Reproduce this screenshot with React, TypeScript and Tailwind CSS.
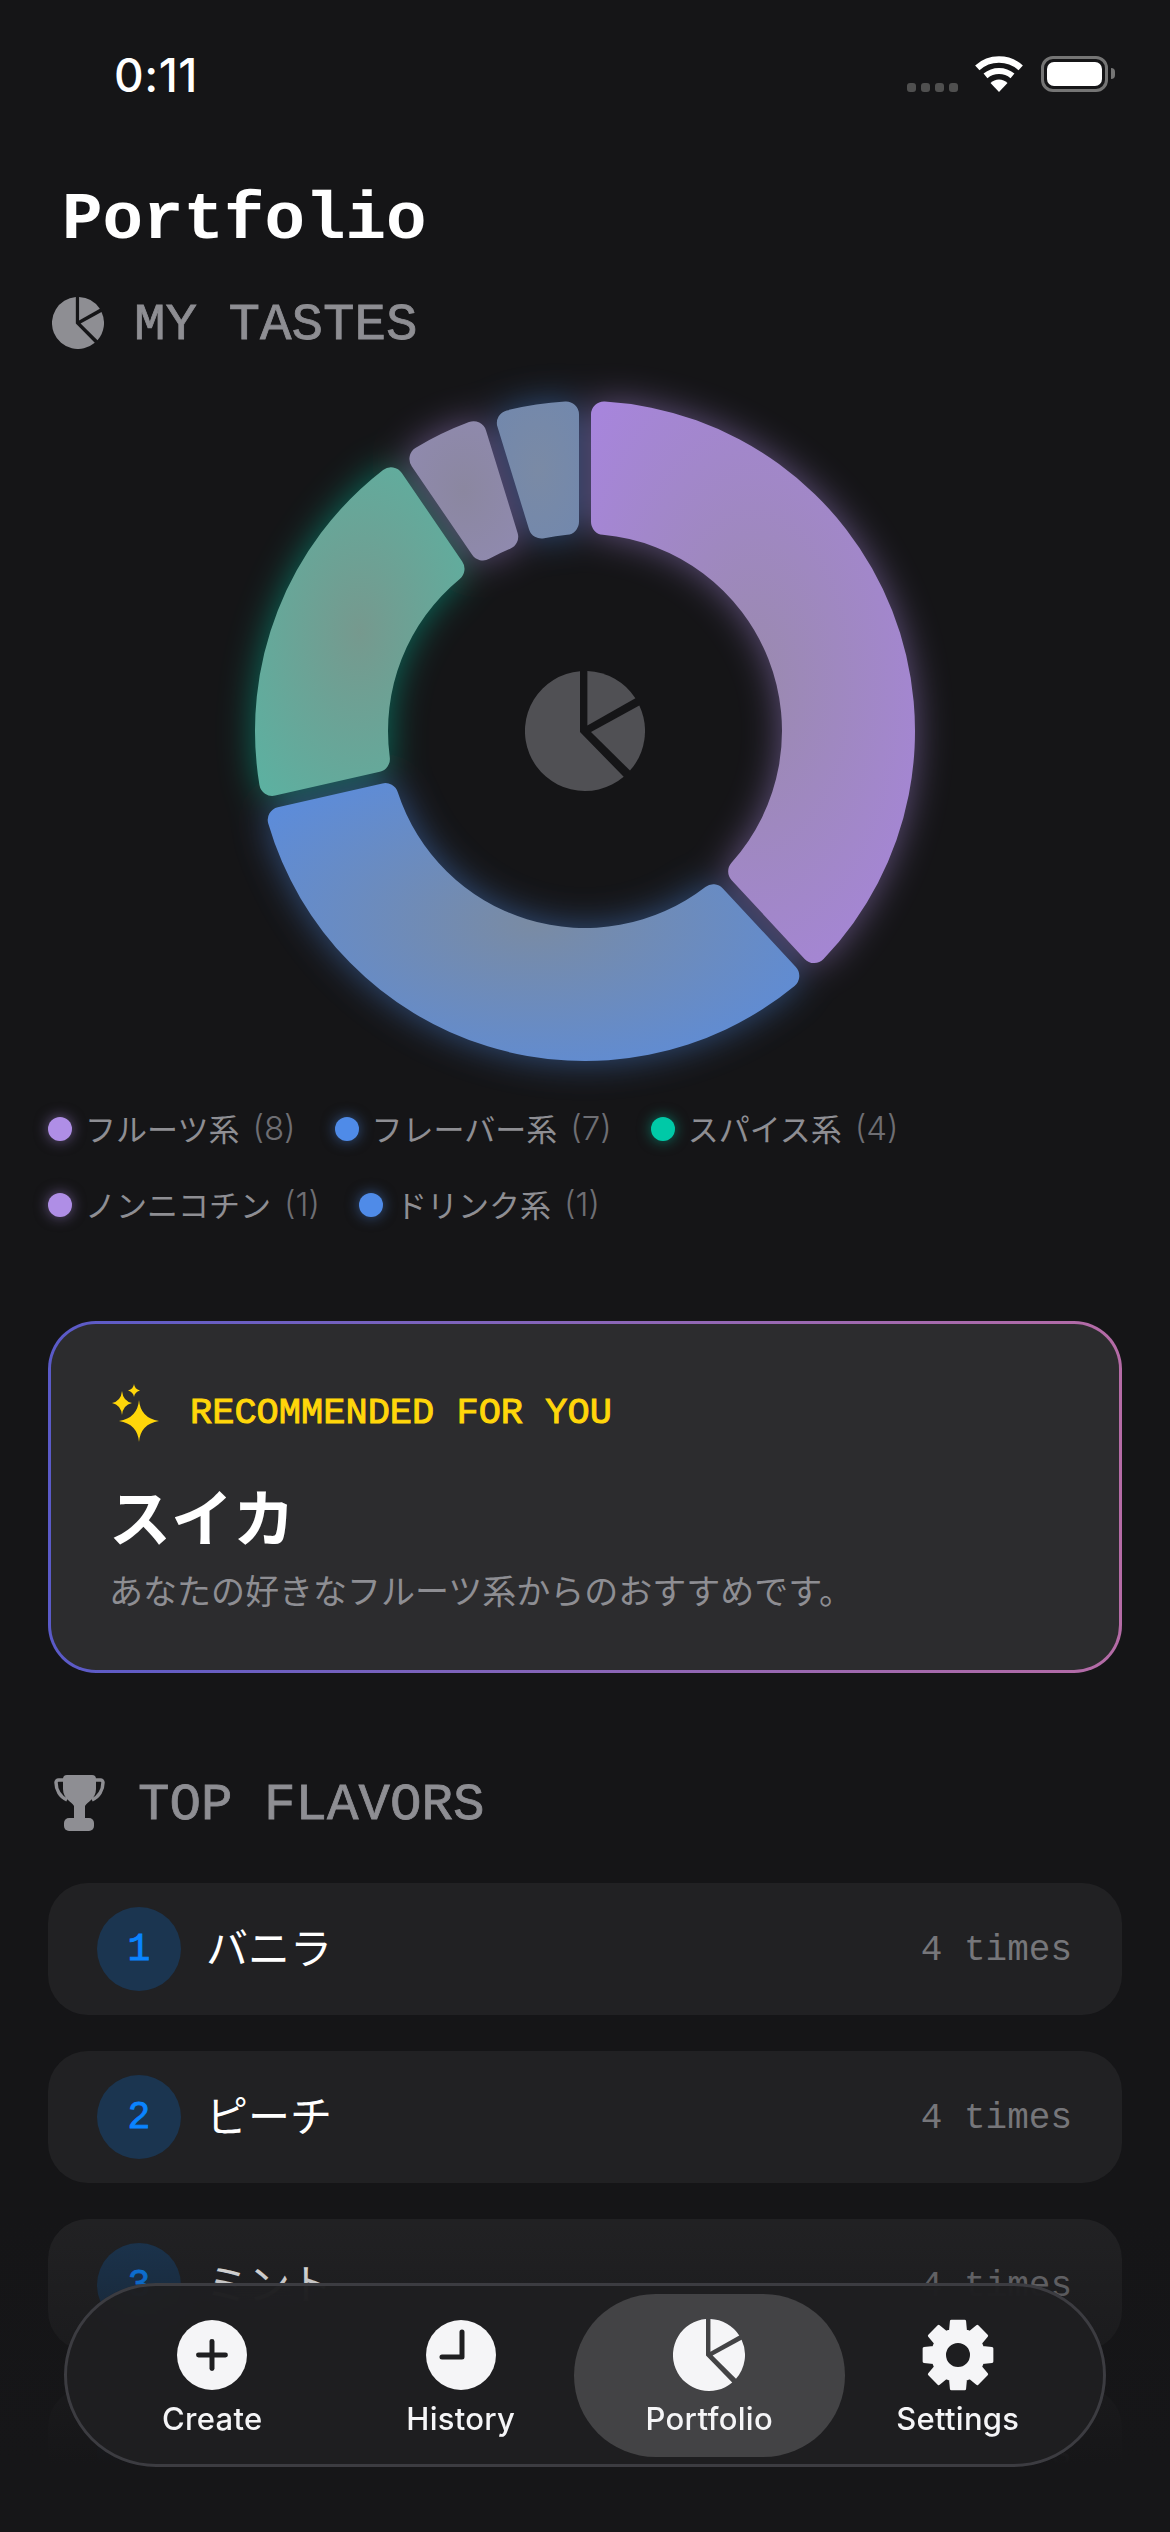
import { LuPlus } from "react-icons/lu";

const segments = [
  { value: 8, glow: "#af8ee6", center: "#9a8aae", edge: "#a785dc" },
  { value: 7, glow: "#4f8be8", center: "#7a8ba3", edge: "#5a8cde" },
  { value: 4, glow: "#00c9a7", center: "#76998e", edge: "#5cb1a1" },
  { value: 1, glow: "#af8ee6", center: "#8b87a0", edge: "#908ab0" },
  { value: 1, glow: "#4f8be8", center: "#7a8aa5", edge: "#7288ad" },
];

const legend = [
  { name: "フルーツ系", count: 8, dot: "bg-[#af8ee6] shadow-[0_0_14px_#af8ee688]" },
  { name: "フレーバー系", count: 7, dot: "bg-[#4f8be8] shadow-[0_0_14px_#4f8be888]" },
  { name: "スパイス系", count: 4, dot: "bg-[#00c9a7] shadow-[0_0_14px_#00c9a788]" },
  { name: "ノンニコチン", count: 1, dot: "bg-[#af8ee6] shadow-[0_0_14px_#af8ee688]" },
  { name: "ドリンク系", count: 1, dot: "bg-[#4f8be8] shadow-[0_0_14px_#4f8be888]" },
];

const flavors = [
  { rank: 1, name: "バニラ", times: 4 },
  { rank: 2, name: "ピーチ", times: 4 },
  { rank: 3, name: "ミント", times: 4 },
  { rank: 4, name: "コーヒー", times: 3 },
];

const CX = 380;
const CY = 370;
const OUTER = 330;
const INNER = 197;
const GAP = 6;
const CORNER = 13;

// point at distance `along` on the radial line of `angle`, shifted sideways by `side`
function pt(angle: number, along: number, side: number) {
  const ux = Math.sin(angle);
  const uy = -Math.cos(angle);
  const x = CX + ux * along - uy * side;
  const y = CY + uy * along + ux * side;
  return `${x.toFixed(2)} ${y.toFixed(2)}`;
}

function sectorPath(a0: number, a1: number) {
  const c = CORNER;
  const off = c + GAP;
  const dOut = Math.asin(off / (OUTER - c));
  const dIn = Math.asin(off / (INNER + c));
  const lenOut = Math.sqrt((OUTER - c) ** 2 - off ** 2);
  const lenIn = Math.sqrt((INNER + c) ** 2 - off ** 2);
  const large = a1 - a0 - 2 * dOut > Math.PI ? 1 : 0;
  return [
    `M${pt(a0, lenIn, GAP)}`,
    `L${pt(a0, lenOut, GAP)}`,
    `A${c} ${c} 0 0 1 ${pt(a0 + dOut, OUTER, 0)}`,
    `A${OUTER} ${OUTER} 0 ${large} 1 ${pt(a1 - dOut, OUTER, 0)}`,
    `A${c} ${c} 0 0 1 ${pt(a1, lenOut, -GAP)}`,
    `L${pt(a1, lenIn, -GAP)}`,
    `A${c} ${c} 0 0 1 ${pt(a1 - dIn, INNER, 0)}`,
    `A${INNER} ${INNER} 0 ${large} 0 ${pt(a0 + dIn, INNER, 0)}`,
    `A${c} ${c} 0 0 1 ${pt(a0, lenIn, GAP)}`,
    "Z",
  ].join(" ");
}

function gearPath() {
  const parts: string[] = [];
  for (let k = 0; k < 8; k++) {
    const a = (k * Math.PI) / 4;
    const p = (deg: number, r: number) => {
      const t = a + (deg * Math.PI) / 180;
      return `${(36 + Math.sin(t) * r).toFixed(2)} ${(36 - Math.cos(t) * r).toFixed(2)}`;
    };
    parts.push(`${k === 0 ? "M" : "L"}${p(-17, 25.5)}`, `L${p(-11, 34.5)}`, `L${p(11, 34.5)}`, `L${p(17, 25.5)}`);
  }
  return parts.join(" ") + " Z M36 22.5 A13.5 13.5 0 1 0 36 49.5 A13.5 13.5 0 1 0 36 22.5 Z";
}

function PieIcon({ className }: { className: string }) {
  return (
    <svg viewBox="0 0 120 120" className={className} fill="currentColor">
      <path d="M55 .2V61L98.7 105.8A60 60 0 1 1 55 .2Z" />
      <path d="M62.4 0V54.5L110.4 27.3A60 60 0 0 0 62.4 0Z" />
      <path d="M66 61L114.3 34.4A60 60 0 0 1 105 99.6Z" />
    </svg>
  );
}

function Donut() {
  const total = segments.reduce((s, x) => s + x.value, 0);
  let acc = 0;
  const arcs = segments.map((s, i) => {
    const a0 = (acc / total) * Math.PI * 2;
    acc += s.value;
    const a1 = (acc / total) * Math.PI * 2;
    return { ...s, i, d: sectorPath(a0, a1) };
  });
  return (
    <div className="relative mx-auto mt-[8px] h-[740px] w-[760px]">
      <svg viewBox="0 0 760 740" className="h-[740px] w-[760px] overflow-visible">
        <defs>
          <filter id="glow" filterUnits="userSpaceOnUse" x="-60" y="-80" width="880" height="900">
            <feGaussianBlur stdDeviation="18" />
          </filter>
          {arcs.map((a) => (
            <radialGradient key={a.i} id={`seg${a.i}`} cx="0.5" cy="0.5" r="0.68">
              <stop offset="0" stopColor={a.center} />
              <stop offset="1" stopColor={a.edge} />
            </radialGradient>
          ))}
        </defs>
        <g filter="url(#glow)" opacity="0.5">
          {arcs.map((a) => (
            <path key={a.i} d={a.d} fill={a.glow} />
          ))}
        </g>
        {arcs.map((a) => (
          <path key={a.i} d={a.d} fill={`url(#seg${a.i})`} />
        ))}
      </svg>
      <div className="absolute inset-0 flex items-center justify-center">
        <PieIcon className="h-[120px] w-[120px] text-[#505054]" />
      </div>
    </div>
  );
}

function StatusBar() {
  return (
    <div className="flex h-[110px] items-start justify-between pl-[114px] pr-[55px] pt-[47px]">
      <span className="font-['Inter',sans-serif] text-[46px] font-medium leading-[56px] tracking-[0.5px] text-white">0:11</span>
      <div className="mt-[8px] flex h-[37px] items-center">
        <div className="flex gap-[5px] self-end">
          <div className="h-[9px] w-[9px] rounded-[3px] bg-[#4f4f4f]" />
          <div className="h-[9px] w-[9px] rounded-[3px] bg-[#4f4f4f]" />
          <div className="h-[9px] w-[9px] rounded-[3px] bg-[#4f4f4f]" />
          <div className="h-[9px] w-[9px] rounded-[3px] bg-[#4f4f4f]" />
        </div>
        <svg viewBox="0 0 48 36" className="ml-[17px] h-[36px] w-[48px]" fill="none" stroke="#fff">
          <path d="M24 36L15.5 27A12 12 0 0 1 32.5 27Z" fill="#fff" stroke="none" />
          <path d="M10.5 19.9A21 21 0 0 1 37.5 19.9" strokeWidth="6" />
          <path d="M2.3 11.85A32.5 32.5 0 0 1 45.7 11.85" strokeWidth="6.5" />
        </svg>
        <div className="ml-[18px] flex items-center">
          <div className="h-[36px] w-[67px] rounded-[12px] border-[3px] border-[#757575] p-[3px]">
            <div className="h-full w-full rounded-[7px] bg-white" />
          </div>
          <div className="ml-[3px] h-[11px] w-[4px] rounded-r-full bg-[#757575]" />
        </div>
      </div>
    </div>
  );
}

function Sparkles() {
  return (
    <svg viewBox="0 0 48 58" className="h-[58px] w-[48px] shrink-0" fill="#ffd60a">
      <path d="M27 16Q28.5 34 47 37Q28.5 40 27 58Q25.5 40 7 37Q25.5 34 27 16Z" />
      <path d="M10 7Q11 17 20 19Q11 21 10 31Q9 21 0 19Q9 17 10 7Z" />
      <path d="M22 0Q22.6 5 28 6.5Q22.6 8 22 13Q21.4 8 16 6.5Q21.4 5 22 0Z" />
    </svg>
  );
}

function Trophy() {
  return (
    <svg viewBox="0 0 51 56" className="h-[56px] w-[51px] shrink-0" fill="#8e8e93">
      <path d="M13 0H38a4 4 0 0 1 4 4V14C42 24 33 27 31 31V45H20V31C18 27 9 24 9 14V4a4 4 0 0 1 4-4Z" />
      <rect x="10" y="43" width="30" height="13" rx="5" />
      <path d="M10 5H4.5a2.5 2.5 0 0 0-2.5 2.5C2 15 6 22 13 25" fill="none" stroke="#8e8e93" strokeWidth="3.5" />
      <path d="M41 5H46.5a2.5 2.5 0 0 1 2.5 2.5C49 15 45 22 38 25" fill="none" stroke="#8e8e93" strokeWidth="3.5" />
    </svg>
  );
}

function NavItem({ label, active, children }: { label: string; active?: boolean; children: React.ReactNode }) {
  return (
    <div className="relative flex h-[163px] flex-1 flex-col items-center pt-[26px]">
      {active && <div className="absolute -inset-x-[11px] inset-y-0 rounded-[82px] bg-[#434345]" />}
      <div className="relative flex h-[70px] items-center justify-center">{children}</div>
      <span className="relative mt-[11px] font-['Inter',sans-serif] text-[31px] font-medium leading-[36px] tracking-[0.3px] text-[#f5f5f7]">{label}</span>
    </div>
  );
}

function BottomNav() {
  return (
    <div className="absolute left-[64px] top-[2283px] h-[184px] w-[1042px] rounded-[92px] border-[3px] border-[#3c3c41] bg-[#1f1f21]/95 px-[21px] py-[8px] backdrop-blur-xl">
      <div className="flex">
        <NavItem label="Create">
          <div className="flex h-[70px] w-[70px] items-center justify-center rounded-full bg-[#f5f5f7] text-[#1f1f21]">
            <LuPlus size={46} strokeWidth={2.6} />
          </div>
        </NavItem>
        <NavItem label="History">
          <svg viewBox="0 0 70 70" className="h-[70px] w-[70px]">
            <circle cx="35" cy="35" r="35" fill="#f5f5f7" />
            <path d="M36 12V37H16" fill="none" stroke="#1f1f21" strokeWidth="5" strokeLinecap="round" strokeLinejoin="round" />
          </svg>
        </NavItem>
        <NavItem label="Portfolio" active>
          <PieIcon className="h-[72px] w-[72px] text-[#f5f5f7]" />
        </NavItem>
        <NavItem label="Settings">
          <svg viewBox="0 0 72 72" className="h-[72px] w-[72px]">
            <path d={gearPath()} fill="#f5f5f7" fillRule="evenodd" stroke="#f5f5f7" strokeWidth="3" strokeLinejoin="round" />
          </svg>
        </NavItem>
      </div>
    </div>
  );
}

export default function App() {
  return (
    <div className="relative h-[2532px] w-[1170px] overflow-hidden bg-[#151517]">
      <StatusBar />

      <h1 className="mt-[70px] pl-[62px] font-['Liberation_Mono',monospace] text-[67.5px] font-bold leading-[80px] text-white">Portfolio</h1>

      {/* My tastes */}
      <div className="mt-[33px] flex h-[60px] items-center gap-[30px] pl-[52px]">
        <PieIcon className="h-[52px] w-[52px] shrink-0 text-[#8e8e93]" />
        <span className="mt-[4px] font-['Liberation_Mono',monospace] text-[52.5px] leading-[60px] text-[#8e8e93] [-webkit-text-stroke:0.8px_#8e8e93]">MY TASTES</span>
      </div>

      <Donut />

      {/* Legend */}
      <div className="mt-[8px] flex flex-wrap gap-x-[39px] gap-y-[36px] px-[48px]">
        {legend.map((l) => (
          <div key={l.name} className="flex h-[40px] items-center">
            <div className={`h-[24px] w-[24px] rounded-full ${l.dot}`} />
            <span className="mb-[2px] ml-[13px] font-['Noto_Sans_CJK_JP',sans-serif] text-[31px] leading-[40px] text-[#8e8e93]">{l.name}</span>
            <span className="mb-[2px] ml-[13px] font-['Inter',sans-serif] text-[33px] font-light leading-[40px] text-[#6e6e73]">({l.count})</span>
          </div>
        ))}
      </div>

      {/* Recommendation */}
      <div className="mx-[48px] mt-[96px] h-[352px] rounded-[48px] bg-gradient-to-r from-[#5a5ac8] to-[#b56ba6] p-[3px]">
        <div className="h-full rounded-[45px] bg-[#2c2c2e] px-[61px] pt-[60px]">
          <div className="flex h-[58px] items-center gap-[30px]">
            <Sparkles />
            <span className="font-['Liberation_Mono',monospace] text-[37px] leading-[58px] text-[#ffd60a] [-webkit-text-stroke:1px_#ffd60a]">RECOMMENDED FOR YOU</span>
          </div>
          <div className="-ml-[3px] mt-[38px] font-['Noto_Sans_CJK_JP',sans-serif] text-[62px] font-bold leading-[70px] text-white">スイカ</div>
          <div className="-ml-[3px] mt-[18px] font-['Noto_Sans_CJK_JP',sans-serif] text-[34px] leading-[44px] text-[#8e8e93]">あなたの好きなフルーツ系からのおすすめです。</div>
        </div>
      </div>

      {/* Top flavors */}
      <div className="mt-[100px] flex h-[60px] items-center gap-[33px] pl-[54px]">
        <Trophy />
        <span className="mt-[4px] font-['Liberation_Mono',monospace] text-[52.5px] leading-[60px] text-[#8e8e93] [-webkit-text-stroke:0.8px_#8e8e93]">TOP FLAVORS</span>
      </div>

      <div className="mt-[50px] flex flex-col gap-[36px] px-[48px]">
        {flavors.map((f) => (
          <div key={f.rank} className="flex h-[132px] shrink-0 items-center rounded-[40px] bg-[#212123] pl-[49px] pr-[50px]">
            <div className="flex h-[84px] w-[84px] items-center justify-center rounded-full bg-[#1b3550] font-['Liberation_Mono',monospace] text-[38px] text-[#0a84ff] [-webkit-text-stroke:0.8px_#0a84ff]">{f.rank}</div>
            <span className="mb-[6px] ml-[25px] flex-1 font-['Noto_Sans_CJK_JP',sans-serif] text-[42px] leading-[50px] text-white">{f.name}</span>
            <span className="mt-[4px] font-['Liberation_Mono',monospace] text-[36px] leading-[50px] text-[#76767a]">{f.times} times</span>
          </div>
        ))}
      </div>

      {/* Bottom fade under the tab bar */}
      <div className="pointer-events-none absolute inset-x-0 bottom-0 h-[310px] bg-gradient-to-b from-transparent to-[#161618] to-[78%]" />

      <BottomNav />
    </div>
  );
}
